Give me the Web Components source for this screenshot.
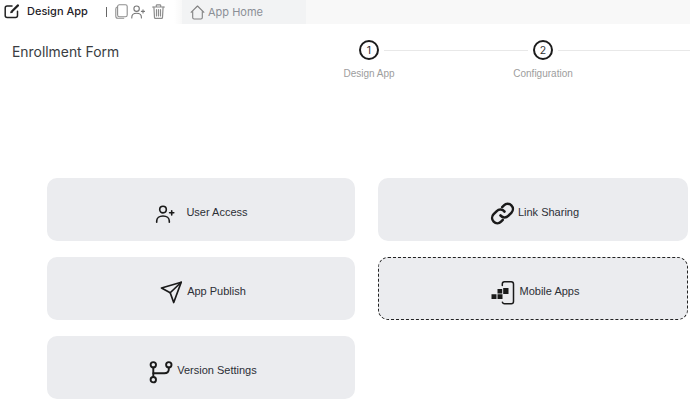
<!DOCTYPE html>
<html><head><meta charset="utf-8"><style>
html,body{margin:0;padding:0;background:#fff}
body{width:690px;height:403px;overflow:hidden;font-family:"Liberation Sans",Arial,sans-serif}
</style></head><body>
<app-shell></app-shell>
<script>
const icons={
edit:'<svg viewBox="0 0 16 16" width="16" height="16" fill="none" stroke="#222" stroke-width="1.5" stroke-linecap="round" stroke-linejoin="round"><path d="M8 3H3.200C2 3 1.200 3.800 1.200 5v7.600c0 1.200.8 2 2 2h8.300c1.200 0 2-.8 2-2V8.300"/><path d="M14 2.400L8.300 8" stroke-width="2.200"/><path d="M7.200 8.100L6.700 9.800l1.700-.5" fill="#222" stroke-width="1"/></svg>',
copy:'<svg viewBox="0 0 13 15" width="13" height="15" fill="none" stroke="#8f8f8f" stroke-width="1.100" stroke-linejoin="round"><rect x="2.600" y=".8" width="9.600" height="12" rx="1.800"/><path d="M2.600 2.800C1.400 3 .8 3.800.8 5v7.200c0 1.300.8 2 2 2h6.400"/></svg>',
userSmall:'<svg viewBox="0 0 14 14" width="14" height="14" fill="none" stroke="#777" stroke-width="1.100" stroke-linecap="round"><circle cx="5.600" cy="3.700" r="2.700"/><path d="M.8 13v-.8c0-2.600 2-4 4.800-4s4.800 1.400 4.800 4v.8"/><path d="M10.400 6.400h3.200M12 4.800V8"/></svg>',
trash:'<svg viewBox="0 0 13 15" width="13" height="15" fill="none" stroke="#8c8c8c" stroke-width="1.200" stroke-linecap="round" stroke-linejoin="round"><path d="M.6 3h11.800M4.300 3V1.600c0-.4.3-.8.8-.8h2.800c.5 0 .8.400.8.800V3"/><path d="M1.900 3l.6 10.400c0 .6.500 1 1 1h6c.5 0 1-.4 1-1L11.100 3"/><path d="M4.500 5.500v6.500M6.500 5.500v6.500M8.500 5.500v6.500"/></svg>',
home:'<svg viewBox="0 0 15 15" width="15" height="15" fill="none" stroke="#808080" stroke-width="1.100" stroke-linejoin="round"><path d="M.8 7.600L7.500 1l6.700 6.600"/><path d="M2.700 6.200v6.300c0 .9.500 1.500 1.400 1.500h6.800c.9 0 1.400-.6 1.400-1.500V6.200"/></svg>',
user:'<svg viewBox="0 0 20 20" width="20" height="20" fill="none" stroke="#1a1a1a" stroke-width="1.600" stroke-linecap="round" stroke-linejoin="round"><circle cx="8" cy="5.600" r="3.300"/><path d="M1.700 18.200v-1.200c0-3 2.600-5 6.300-5s6.300 2 6.300 5v1.200"/><path d="M14.600 8.800h4.200M16.700 6.700v4.200"/></svg>',
link:'<svg viewBox="0 0 24 24" width="25" height="25" fill="none" stroke="#1a1a1a" stroke-width="2.400" stroke-linecap="round"><path d="M10 13.800a5 5 0 0 0 7.500.5l3-3a5 5 0 0 0-7.100-7.100l-1.700 1.700"/><path d="M14 10.200a5 5 0 0 0-7.500-.5l-3 3a5 5 0 0 0 7.100 7.100l1.700-1.700"/></svg>',
send:'<svg viewBox="0 0 22 22.500" width="22" height="23" fill="none" stroke="#1a1a1a" stroke-width="1.700" stroke-linejoin="round"><path d="M21.200 1L1.500 6.800l8.700 4.700 3.500 9.800z"/><path d="M21.200 1L10.200 11.500" stroke-linecap="round"/></svg>',
mobile:'<svg viewBox="0 0 24 24" width="24" height="24"><path d="M11.300 4.500V3c0-1.200.9-2.200 2.100-2.200h6.800c1.300 0 2.300 1 2.300 2.300v17.300c0 1.300-1 2.300-2.300 2.300h-6.800c-1 0-1.700-.6-2-1.400" fill="none" stroke="#1a1a1a" stroke-width="1.500" stroke-linecap="round"/><path d="M6.500 8h4.700v4.400H6.500zM12.200 7h5.300v6h-5.300zM.5 13.300h5v4.700h-5zM6.500 13.300h5v4.700h-5z" fill="#1a1a1a"/></svg>',
branch:'<svg viewBox="0 0 24 24" width="24" height="24" fill="none" stroke="#1a1a1a" stroke-width="1.900" stroke-linecap="round"><circle cx="4.300" cy="4.800" r="2.700"/><circle cx="4.300" cy="19.700" r="2.700"/><circle cx="19.800" cy="4.800" r="2.700"/><path d="M4.300 7.500v9.500"/><path d="M4.300 13.200h11c2.700 0 4.500-1.500 4.500-4V7.500"/></svg>'
};

class NavBar extends HTMLElement{constructor(){super();this.attachShadow({mode:'open'}).innerHTML=`<style>
:host{display:flex;height:24px;background:linear-gradient(90deg,#fff 174px,#f8f8f8 182px);font-family:Inter,sans-serif;align-items:stretch}
.brand{display:flex;align-items:center;width:105px;box-sizing:border-box;padding-left:4px;gap:7px;font-size:11px;font-weight:450;color:#1f2228;height:22px}
.brand span{white-space:nowrap}
.tools{display:flex;align-items:center;width:77px;height:23px;box-sizing:border-box}
.sep{width:1px;height:10px;background:#666;margin-left:1px;margin-right:8px}
.tools svg{display:block}
.tools .u{margin-left:3px}.tools .t{margin-left:7px}
.tab{width:124px;background:#f2f3f4;display:flex;align-items:center;padding-left:8px;gap:3px;box-sizing:border-box;font-size:11px;color:#8b8f96}
</style>
<div class="brand">${icons.edit}<span>Design App</span></div>
<div class="tools"><i class="sep"></i>${icons.copy}<span class="u">${icons.userSmall}</span><span class="t">${icons.trash}</span></div>
<div class="tab">${icons.home}<span>App Home</span></div>`}}
customElements.define('nav-bar',NavBar);

class StepItem extends HTMLElement{constructor(){super();this.attachShadow({mode:'open'}).innerHTML=`<style>
:host{display:block;width:174px;font-family:"Liberation Sans",sans-serif}
.r{display:flex;align-items:center;height:20px}
.lead{width:5px;flex:none}
.c{flex:none;width:20px;height:20px;box-sizing:border-box;border:2px solid #1c1c1c;border-radius:50%;display:flex;align-items:center;justify-content:center;font:10.5px Inter,sans-serif;color:#333}
.l{flex:1;height:1px;background:#e8e8e8;margin-left:5px}
.t{width:58px;margin-left:-14px;text-align:center;font-size:10px;color:#9d9d9d;margin-top:8px;white-space:nowrap;display:flex;justify-content:center}
</style><div class="r"><span class="lead"></span><span class="c"><slot name="n"></slot></span><i class="l"></i></div><div class="t"><slot></slot></div>`}}
customElements.define('step-item',StepItem);

class ActionCard extends HTMLElement{constructor(){super();const ic=this.getAttribute('icon');const g=this.getAttribute('gap')||'5';const p=this.getAttribute('pad')||'0';this.attachShadow({mode:'open'}).innerHTML=`<style>
:host{display:flex;align-items:center;justify-content:center;height:63px;box-sizing:border-box;padding:4px 0 0 ${p}px;background:#ebecef;border-radius:10px;font-size:11px;color:#2c2f36;gap:${g}px}
:host([active]){border:1px dashed #222;}
.i{display:flex;margin-top:4px}
svg{display:block}
</style><span class="i">${icons[ic]}</span><span><slot></slot></span>`}}
customElements.define('action-card',ActionCard);

class AppShell extends HTMLElement{constructor(){super();this.attachShadow({mode:'open'}).innerHTML=`<style>
:host{display:block;width:690px}
.head{display:flex;height:154px;box-sizing:border-box}
h1{margin:20px 0 0;padding-left:12px;width:354px;box-sizing:border-box;font:400 13.9px Inter,sans-serif;color:#3a3d42;line-height:16px;white-space:nowrap}
.steps{display:flex;padding-top:16px;height:fit-content}
.steps step-item:last-child{width:162px}
.grid{display:grid;grid-template-columns:308px 310px;column-gap:23px;grid-auto-rows:63px;row-gap:16px;padding-left:47px}
</style>
<nav-bar></nav-bar>
<div class="head"><h1>Enrollment Form</h1><div class="steps">
<step-item><span slot="n">1</span>Design App</step-item>
<step-item><span slot="n">2</span>Configuration</step-item></div></div>
<div class="grid">
<action-card icon="user" gap="11" pad="1">User Access</action-card>
<action-card icon="link" gap="3" pad="3">Link Sharing</action-card>
<action-card icon="send" gap="5" pad="4">App Publish</action-card>
<action-card icon="mobile" gap="5" pad="4" active>Mobile Apps</action-card>
<action-card icon="branch" gap="4" pad="4">Version Settings</action-card>
</div>`}}
customElements.define('app-shell',AppShell);
</script>
</body></html>
